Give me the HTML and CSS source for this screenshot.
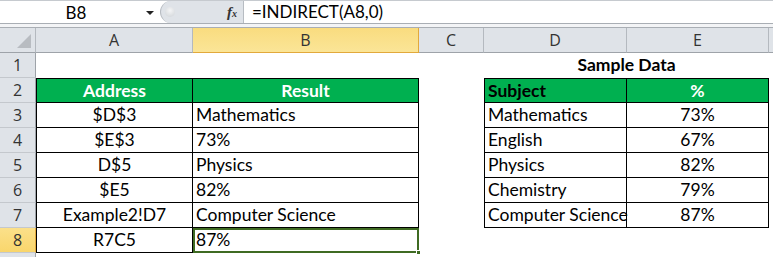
FILE: index.html
```html
<!DOCTYPE html>
<html lang="en">
<head>
  <meta charset="utf-8">
  <title>INDIRECT example</title>
  <link rel="stylesheet" href="styles.css">
</head>
<body>
  <!-- Barre de formule -->
  <div class="formula-bar">
    <div class="name-box">
      <span class="name-text">B8</span>
      <span class="name-arrow"></span>
    </div>
    <div class="fx-zone">
      <span class="knob"></span>
      <span class="fx">f<sub>x</sub></span>
    </div>
    <div class="formula-input">=INDIRECT(A8,0)</div>
  </div>
  <div class="bar-gap"></div>

  <!-- Feuille -->
  <div class="sheet">
    <div class="col-head corner"><span class="corner-tri"></span></div>
    <div class="col-head">A</div>
    <div class="col-head selected">B</div>
    <div class="col-head">C</div>
    <div class="col-head">D</div>
    <div class="col-head">E</div>
    <div class="col-head last"></div>

    <!-- ligne 1 -->
    <div class="row-head">1</div>
    <div class="cell"></div>
    <div class="cell"></div>
    <div class="cell"></div>
    <div class="cell merged bold">Sample Data</div>
    <div class="cell"></div>

    <!-- ligne 2 -->
    <div class="row-head">2</div>
    <div class="cell t green center bold top leftb">Address</div>
    <div class="cell t green center bold top">Result</div>
    <div class="cell"></div>
    <div class="cell t green bold dark top leftb">Subject</div>
    <div class="cell t green center bold top">%</div>
    <div class="cell"></div>

    <!-- ligne 3 -->
    <div class="row-head">3</div>
    <div class="cell t center leftb">$D$3</div>
    <div class="cell t">Mathematics</div>
    <div class="cell"></div>
    <div class="cell t leftb">Mathematics</div>
    <div class="cell t center">73%</div>
    <div class="cell"></div>

    <!-- ligne 4 -->
    <div class="row-head">4</div>
    <div class="cell t center leftb">$E$3</div>
    <div class="cell t">73%</div>
    <div class="cell"></div>
    <div class="cell t leftb">English</div>
    <div class="cell t center">67%</div>
    <div class="cell"></div>

    <!-- ligne 5 -->
    <div class="row-head">5</div>
    <div class="cell t center leftb">D$5</div>
    <div class="cell t">Physics</div>
    <div class="cell"></div>
    <div class="cell t leftb">Physics</div>
    <div class="cell t center">82%</div>
    <div class="cell"></div>

    <!-- ligne 6 -->
    <div class="row-head">6</div>
    <div class="cell t center leftb">$E5</div>
    <div class="cell t">82%</div>
    <div class="cell"></div>
    <div class="cell t leftb">Chemistry</div>
    <div class="cell t center">79%</div>
    <div class="cell"></div>

    <!-- ligne 7 -->
    <div class="row-head">7</div>
    <div class="cell t center leftb">Example2!D7</div>
    <div class="cell t">Computer Science</div>
    <div class="cell"></div>
    <div class="cell t leftb">Computer Science</div>
    <div class="cell t center">87%</div>
    <div class="cell"></div>

    <!-- ligne 8 -->
    <div class="row-head selected">8</div>
    <div class="cell t center leftb">R7C5</div>
    <div class="cell t active">87%<span class="handle"></span></div>
    <div class="cell"></div>
    <div class="cell"></div>
    <div class="cell"></div>
    <div class="cell"></div>

    <!-- ligne 9 (coupée) -->
    <div class="row-head"></div>
    <div class="cell"></div>
    <div class="cell"></div>
    <div class="cell"></div>
    <div class="cell"></div>
    <div class="cell"></div>
    <div class="cell"></div>
  </div>
</body>
</html>
```

FILE: styles.css
```css
/* Page */
body {
  margin: 0;
  padding: 0;
  width: 773px;
  height: 257px;
  overflow: hidden;
  background: #fff;
  font-family: Lato, "Liberation Sans", sans-serif;
  font-size: 17.5px;
  color: #000;
}

/* Barre de formule */
.formula-bar {
  display: flex;
  height: 22px;
  border-top: 1px solid #c6cacf;
  border-bottom: 1px solid #a9aeb4;
  background: #fff;
}
.name-box {
  width: 160px;
  display: flex;
  align-items: center;
}
.name-text {
  flex: 1;
  text-align: center;
  font-size: 17px;
  padding-left: 6px;
}
.name-arrow {
  width: 0;
  height: 0;
  border-left: 4px solid transparent;
  border-right: 4px solid transparent;
  border-top: 4px solid #222;
  margin-right: 6px;
  margin-top: 1px;
}
.fx-zone {
  width: 84px;
  background: #dfe3e8;
  display: flex;
  align-items: center;
  justify-content: space-between;
  border-right: 1px solid #b7bcc2;
  border-left: 1px solid #b6bbc1;
  border-radius: 11px 0 0 11px;
  box-sizing: border-box;
}
.knob {
  width: 10px;
  height: 10px;
  border-radius: 50%;
  background: radial-gradient(circle at 50% 35%, #f4f5f6, #cfd3d7);
  margin-left: 4px;
}
.fx {
  font-family: "Liberation Serif", serif;
  font-style: italic;
  font-weight: bold;
  font-size: 15px;
  color: #333;
  margin-right: 6px;
}
.fx sub {
  font-size: 10px;
  vertical-align: 0;
}
.formula-input {
  flex: 1;
  padding-left: 8px;
  font-size: 17px;
  line-height: 22px;
}
.bar-gap {
  height: 3px;
  background: #f3f4f6;
  border-bottom: 1px solid #a9aeb4;
}

/* Grille de la feuille */
.sheet {
  display: grid;
  grid-template-columns: 36px 157px 226px 65px 143px 142px 4px;
  grid-template-rows: repeat(9, 25px) 1fr;
  height: 230px;
}

/* En-têtes de colonnes */
.col-head {
  background: #dfe3e8;
  border-right: 1px solid #b4b9bf;
  border-bottom: 1px solid #9ea3a9;
  box-sizing: border-box;
  font-family: "Open Sans", sans-serif;
  font-size: 16px;
  color: #333;
  text-align: center;
  line-height: 25px;
}
.col-head.selected {
  background: linear-gradient(#f9dc7f, #fbe597);
  border-right: 1px solid #e2a93c;
  border-bottom: 1px solid #e2a93c;
}
.col-head.last {
  border-right: none;
}
.corner {
  position: relative;
}
.corner-tri {
  position: absolute;
  right: 4px;
  bottom: 4px;
  width: 0;
  height: 0;
  border-left: 14px solid transparent;
  border-bottom: 14px solid #b8bcc1;
}

/* En-têtes de lignes */
.row-head {
  grid-column: 1;
  background: #dfe3e8;
  border-right: 1px solid #9ea3a9;
  border-bottom: 1px solid #c4c8cd;
  box-sizing: border-box;
  font-family: "Open Sans", sans-serif;
  font-size: 16px;
  color: #333;
  text-align: center;
  line-height: 24px;
}
.row-head.selected {
  background: linear-gradient(#fbe08a, #f9d66c);
  border-right: 1px solid #e2a93c;
}

/* Cellules */
.cell {
  box-sizing: border-box;
  padding: 0 3px;
  line-height: 24px;
  white-space: nowrap;
}
.cell.merged {
  grid-column: 5 / span 2;
  text-align: center;
}
.cell.t {
  border-right: 1px solid #000;
  border-bottom: 1px solid #000;
}
.cell.top {
  border-top: 1px solid #000;
  line-height: 23px;
}
.cell.leftb {
  border-left: 1px solid #000;
}
.cell.green {
  background: #00b050;
  color: #fff;
}
.cell.green.dark {
  color: #000;
}
.center {
  text-align: center;
}
.bold {
  font-weight: bold;
}

/* Cellule active */
.cell.active {
  position: relative;
  outline: 2px solid #3f6b23;
  outline-offset: -2px;
}
.handle {
  position: absolute;
  right: -3px;
  bottom: -3px;
  width: 5px;
  height: 5px;
  background: #3f6b23;
  border: 1px solid #fff;
  box-sizing: border-box;
}
```
